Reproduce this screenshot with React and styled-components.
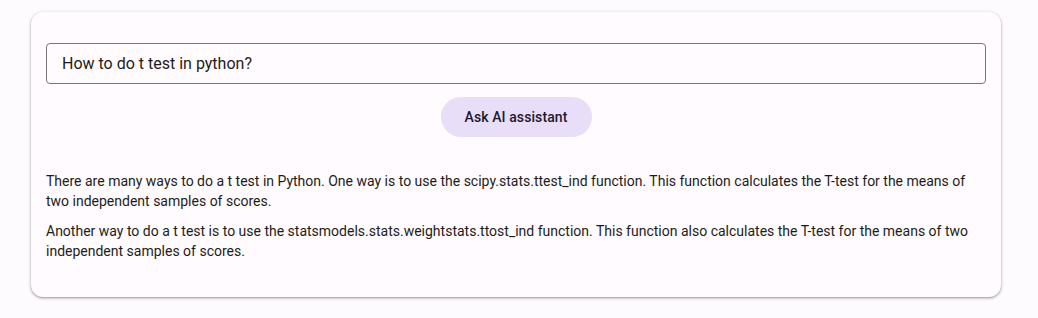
import React from "react";
import styled, { createGlobalStyle } from "styled-components";

const Global = createGlobalStyle`
  html, body { margin: 0; padding: 0; background: #fefbff; }
  body { font-family: Roboto, "Noto Sans", sans-serif; }
`;

const Page = styled.div`
  padding: 12px 37px 20px 31px;
`;

const Card = styled.section`
  width: 970px;
  box-sizing: border-box;
  background: #fffbfe;
  border-radius: 12px;
  box-shadow: 0 1px 3px 1px rgba(0,0,0,0.12), 0 1px 2px rgba(0,0,0,0.28);
  padding: 31px 15px 36px 15px;
  display: flex;
  flex-direction: column;
`;

const Input = styled.input`
  height: 41px;
  box-sizing: border-box;
  width: 100%;
  border: 1px solid #79747e;
  border-radius: 4px;
  background: transparent;
  padding: 0 15px;
  font-family: Roboto, sans-serif;
  font-size: 16px;
  color: #1d1b20;
  outline: none;
`;

const ButtonRow = styled.div`
  display: flex;
  justify-content: center;
  margin-top: 13px;
`;

const Button = styled.button`
  height: 40px;
  width: 151px;
  border: none;
  border-radius: 20px;
  background: #e8def8;
  color: #1d192b;
  font-family: Roboto, sans-serif;
  font-size: 14px;
  font-weight: 500;
  letter-spacing: 0.1px;
  cursor: pointer;
`;

const Answer = styled.div`
  margin-top: 34px;
  display: flex;
  flex-direction: column;
  gap: 10px;
`;

const Para = styled.p`
  margin: 0;
  font-size: 14px;
  line-height: 20px;
  color: #1d1b20;
`;

export default function App() {
  return (
    <>
      <Global />
      <Page>
        <Card>
          <Input defaultValue="How to do t test in python?" />
          <ButtonRow>
            <Button>Ask AI assistant</Button>
          </ButtonRow>
          <Answer>
            <Para>
              There are many ways to do a t test in Python. One way is to use the scipy.stats.ttest_ind function. This function calculates the T-test for the means of two independent samples of scores.
            </Para>
            <Para>
              Another way to do a t test is to use the statsmodels.stats.weightstats.ttost_ind function. This function also calculates the T-test for the means of two independent samples of scores.
            </Para>
          </Answer>
        </Card>
      </Page>
    </>
  );
}
